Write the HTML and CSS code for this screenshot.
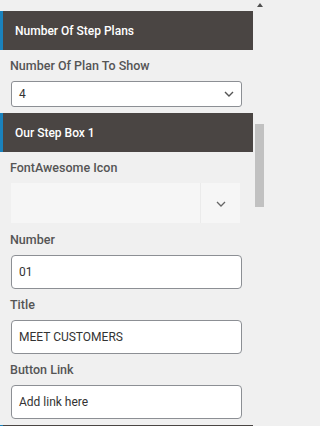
FILE: index.html
```html
<!DOCTYPE html>
<html>
<head>
<meta charset="utf-8">
<link rel="stylesheet" href="styles.css">
</head>
<body>
<div class="wrap">
  <div class="panel">
    <div class="head">Number Of Step Plans</div>
    <div class="field">
      <div class="label">Number Of Plan To Show</div>
      <div class="select">
        <span>4</span>
        <svg class="chev" width="10" height="6" viewBox="0 0 10 6"><path d="M1 1l4 4 4-4" fill="none" stroke="#555" stroke-width="1.4"/></svg>
      </div>
    </div>
    <div class="head">Our Step Box 1</div>
    <div class="field">
      <div class="label">FontAwesome Icon</div>
      <div class="iconbox">
        <div class="iconval"></div>
        <div class="iconbtn"><svg width="10" height="6" viewBox="0 0 10 6"><path d="M1 1l4 4 4-4" fill="none" stroke="#666" stroke-width="1.3"/></svg></div>
      </div>
    </div>
    <div class="field field-gap">
      <div class="label">Number</div>
      <div class="input">01</div>
    </div>
    <div class="field">
      <div class="label">Title</div>
      <div class="input">MEET CUSTOMERS</div>
    </div>
    <div class="field">
      <div class="label">Button Link</div>
      <div class="input">Add link here</div>
    </div>
    <div class="head head-next"></div>
  </div>
  <div class="scrollbar">
    <div class="arrow"></div>
    <div class="thumb"></div>
  </div>
</div>
</body>
</html>
```

FILE: styles.css
```css
html, body {
  margin: 0;
  padding: 0;
  background: #f0f0f0;
  height: 426px;
  overflow: hidden;
}
body {
  font-family: Roboto, "Liberation Sans", sans-serif;
}
.wrap {
  display: flex;
  align-items: flex-start;
}
.panel {
  width: 253px;
  padding-top: 11px;
}
.head {
  height: 39px;
  box-sizing: border-box;
  background: #4a4543;
  border-left: 3px solid #1a82bd;
  color: #fff;
  font-size: 12px;
  font-weight: 500;
  padding-left: 12px;
  display: flex;
  align-items: center;
}
.field {
  padding: 0 11px 0 11px;
}
.field + .head {
  margin-top: 6px;
}
.label {
  font-size: 12.5px;
  font-weight: 500;
  color: #555;
  line-height: 16px;
  margin: 8px 0 7px -1px;
}
.field-gap .label {
  margin-top: 9px;
}
.select {
  width: 231px;
  height: 26px;
  box-sizing: border-box;
  background: #fff;
  border: 1px solid #8c8f94;
  border-radius: 3px;
  display: flex;
  align-items: center;
  justify-content: space-between;
  padding: 0 7px 0 7px;
  font-size: 12px;
  color: #333;
}
.chev {
  display: block;
}
.iconbox {
  width: 229px;
  height: 40px;
  background: #f6f6f6;
  display: flex;
}
.iconval {
  flex: 1;
}
.iconbtn {
  width: 39px;
  border-left: 1px solid #ebebeb;
  display: flex;
  align-items: center;
  justify-content: center;
}
.iconbtn svg {
  display: block;
  margin-top: 2px;
}
.input {
  width: 231px;
  height: 34px;
  box-sizing: border-box;
  background: #fff;
  border: 1px solid #8c8f94;
  border-radius: 4px;
  display: flex;
  align-items: center;
  padding-left: 7px;
  font-size: 12px;
  color: #333;
}
.scrollbar {
  width: 9px;
  margin-left: 2px;
  height: 426px;
  display: flex;
  flex-direction: column;
  align-items: center;
}
.arrow {
  width: 0;
  height: 0;
  border-left: 3px solid transparent;
  border-right: 3px solid transparent;
  border-bottom: 4px solid #505050;
  margin-top: 3px;
  margin-left: 1px;
}
.thumb {
  width: 9px;
  height: 83px;
  background: #c1c1c1;
  margin-top: 117px;
}
```
